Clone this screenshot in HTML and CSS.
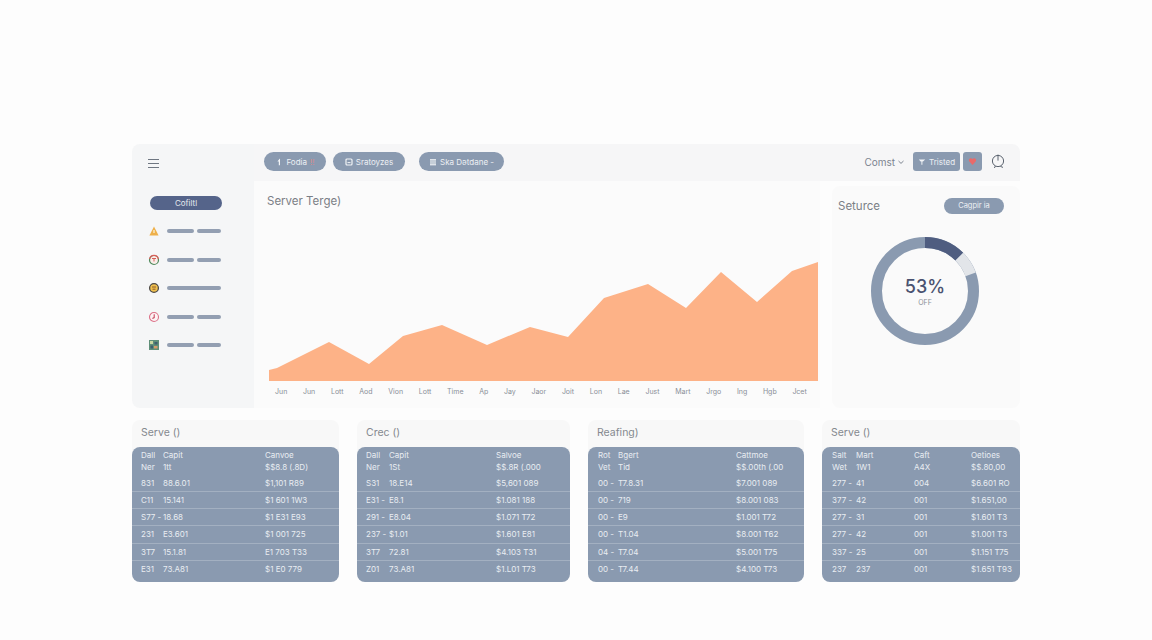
FILE: index.html
```html
<!DOCTYPE HTML>
<html>
<head>
    <meta charset="utf-8">
    <title>Server dashboard</title>
    <link rel="stylesheet" href="styles.css">
</head>
<body>
<div class="dash">
    <div class="top">
        <div class="side">
            <div class="burger"><i></i><i></i><i></i></div>
            <div class="side-pill">Cofiltl</div>
            <div class="side-item">
                <svg class="side-icon" viewBox="0 0 12 12"><path d="M6 1.5 L10.6 10.4 H1.4 Z" fill="#eeb04a"/><rect x="5.4" y="5" width="1.2" height="3" fill="#fff3d8"/></svg>
                <span class="bar"></span><span class="bar"></span>
            </div>
            <div class="side-item">
                <svg class="side-icon" viewBox="0 0 12 12"><circle cx="6" cy="6" r="4.5" fill="#fbeeea" stroke="#4f8a5c" stroke-width="1.2"/><path d="M1.6 5 A4.5 4.5 0 0 1 10.4 5" fill="none" stroke="#d9605a" stroke-width="1.2"/><path d="M4 4.5 H8 M6 4.5 V7.5" stroke="#d9605a" stroke-width="1"/></svg>
                <span class="bar"></span><span class="bar"></span>
            </div>
            <div class="side-item">
                <svg class="side-icon" viewBox="0 0 12 12"><circle cx="6" cy="6" r="4.4" fill="#f1c14e" stroke="#4d4a48" stroke-width="1.3"/><path d="M4 5 H8 M4.5 7.2 H7.5" stroke="#8a5a2c" stroke-width="1"/></svg>
                <span class="bar wide"></span>
            </div>
            <div class="side-item">
                <svg class="side-icon" viewBox="0 0 12 12"><circle cx="6" cy="6" r="4.5" fill="#fdf3f5" stroke="#dc7188" stroke-width="1.1"/><path d="M6.2 3.2 V6.6 L4.4 7.6" fill="none" stroke="#c9485f" stroke-width="1.1"/></svg>
                <span class="bar"></span><span class="bar"></span>
            </div>
            <div class="side-item">
                <svg class="side-icon" viewBox="0 0 12 12"><rect x="1" y="1" width="10" height="10" fill="#5f8f78"/><rect x="2" y="2" width="3" height="3" fill="#c9d6a2"/><rect x="6.5" y="3" width="3" height="2.5" fill="#3e5f6e"/><rect x="2.5" y="6.5" width="2.5" height="3" fill="#3e5f6e"/><rect x="6" y="7" width="3.5" height="2.5" fill="#d59a6a"/></svg>
                <span class="bar"></span><span class="bar"></span>
            </div>
        </div>
        <div class="main">
            <div class="topbar">
                <div class="tool tool-1">
                    <svg class="tool-icon" viewBox="0 0 8 8"><path d="M4.6 .8 L2.4 3.6 H3.8 V7.2 H5 V.8 Z" fill="#f1f3f6"/></svg>
                    <span>Fodia</span><span class="tool-red">!!</span>
                </div>
                <div class="tool tool-2">
                    <svg class="tool-icon" viewBox="0 0 8 8"><rect x="1" y="1" width="6" height="6" rx="1" fill="none" stroke="#f1f3f6" stroke-width="1.2"/><path d="M2.5 4.6 H5.5" stroke="#f1f3f6"/></svg>
                    <span>Sratoyzes</span>
                </div>
                <div class="tool tool-3">
                    <svg class="tool-icon" viewBox="0 0 8 8"><rect x="1" y="1" width="6" height="6.4" fill="#dfe4ea"/><path d="M1 3 H7 M1 5 H7" stroke="#8a9ab0" stroke-width=".6"/></svg>
                    <span>Ska Dətdane -</span>
                </div>
                <div class="top-right">
                    <span class="count">Comst</span>
                    <svg class="chev" viewBox="0 0 8 8"><path d="M1.5 3 L4 5.4 L6.5 3" fill="none" stroke="#7c8490" stroke-width="1"/></svg>
                    <div class="square">
                        <svg class="tool-icon" viewBox="0 0 8 8"><path d="M.8 1.4 H7.2 L5 3.6 H4.4 V6.8 H3.4 V3.6 H2.6 Z" fill="#f1f3f6"/></svg>
                        <span>Tristed</span>
                    </div>
                    <div class="alert"><svg viewBox="0 0 8 8"><path d="M4 7 L1 3.8 A1.7 1.7 0 0 1 4 2 A1.7 1.7 0 0 1 7 3.8 Z" fill="#e86a6a"/></svg></div>
                    <svg class="bell" viewBox="0 0 14 15"><circle cx="7" cy="7" r="5.6" fill="none" stroke="#5c6470" stroke-width="1"/><path d="M7 .6 V6.6 M4.4 12 L3.4 14 M9.4 12.4 L12 13.4" fill="none" stroke="#5c6470" stroke-width="1"/></svg>
                </div>
            </div>
            <div class="panels">
                <div class="chart-panel">
                    <div class="panel-title">Server Terge)</div>
                    <svg class="area" viewBox="0 0 549 126">
                        <polygon fill="#fdb287" points="0,115 8,113 60,87 100,109 134,81 173,70 218,90 261,72 299,82 335,43 379,29 417,53 452,17 488,47 523,16 549,7 549,126 0,126"/>
                    </svg>
                    <div class="months">
                        <span>Jun</span><span>Jun</span><span>Lott</span><span>Aod</span><span>Vion</span><span>Lott</span><span>Time</span><span>Ap</span><span>Jay</span><span>Jaor</span><span>Joit</span><span>Lon</span><span>Lae</span><span>Just</span><span>Mart</span><span>Jrgo</span><span>Ing</span><span>Hgb</span><span>Jcet</span>
                    </div>
                </div>
                <div class="donut-panel">
                    <div class="donut-head">
                        <span class="panel-title">Seturce</span>
                        <span class="donut-pill">Cagpir ia</span>
                    </div>
                    <div class="donut">
                        <svg class="donut-ring" viewBox="0 0 108 108">
                            <circle cx="54" cy="54" r="48.5" fill="none" stroke="#8a9ab0" stroke-width="11"/>
                            <path d="M54 5.5 A48.5 48.5 0 0 1 88.3 19.7" fill="none" stroke="#4f5d80" stroke-width="11"/>
                            <path d="M88.3 19.7 A48.5 48.5 0 0 1 99.6 37.4" fill="none" stroke="#e2e5e9" stroke-width="11"/>
                        </svg>
                        <div class="donut-num">53%</div>
                        <div class="donut-sub">OFF</div>
                    </div>
                </div>
            </div>
        </div>
    </div>

    <div class="cards">
        <div class="card card-1">
            <div class="card-title">Serve ()</div>
            <div class="sheet">
                <div class="head"><div class="row"><span>Dall</span><span>Capit</span><span>Canvoe</span></div><div class="row"><span>Ner</span><span>1tt</span><span>$$8.8 (.8D)</span></div></div>
                <div class="row"><span>831</span><span>88.6.01</span><span>$1,101 R89</span></div>
                <div class="row"><span>C11</span><span>15.141</span><span>$1 601 1W3</span></div>
                <div class="row"><span>S77 -</span><span>18.68</span><span>$1 E31 E93</span></div>
                <div class="row"><span>231</span><span>E3.601</span><span>$1 001 725</span></div>
                <div class="row"><span>3T7</span><span>15.1.81</span><span>E1 703 T33</span></div>
                <div class="row"><span>E31</span><span>73.A81</span><span>$1 E0 779</span></div>
            </div>
        </div>
        <div class="card card-2">
            <div class="card-title">Crec ()</div>
            <div class="sheet">
                <div class="head"><div class="row"><span>Dall</span><span>Capit</span><span>Salvoe</span></div><div class="row"><span>Ner</span><span>1St</span><span>$$.8R (.000</span></div></div>
                <div class="row"><span>S31</span><span>18.E14</span><span>$5,601 089</span></div>
                <div class="row"><span>E31 -</span><span>E8.1</span><span>$1.081 188</span></div>
                <div class="row"><span>291 -</span><span>E8.04</span><span>$1.071 T72</span></div>
                <div class="row"><span>237 -</span><span>$1.01</span><span>$1.601 E81</span></div>
                <div class="row"><span>3T7</span><span>72.81</span><span>$4.103 T31</span></div>
                <div class="row"><span>Z01</span><span>73.A81</span><span>$1.L01 T73</span></div>
            </div>
        </div>
        <div class="card card-3">
            <div class="card-title">Reafing)</div>
            <div class="sheet">
                <div class="head"><div class="row"><span>Rot</span><span>Bgert</span><span>Cattmoe</span></div><div class="row"><span>Vet</span><span>Tid</span><span>$$.00th (.00</span></div></div>
                <div class="row"><span>00 -</span><span>T7.8.31</span><span>$7.001 089</span></div>
                <div class="row"><span>00 -</span><span>719</span><span>$8.001 083</span></div>
                <div class="row"><span>00 -</span><span>E9</span><span>$1.001 T72</span></div>
                <div class="row"><span>00 -</span><span>T1.04</span><span>$8.001 T62</span></div>
                <div class="row"><span>04 -</span><span>T7.04</span><span>$5.001 T75</span></div>
                <div class="row"><span>00 -</span><span>T7.44</span><span>$4.100 T73</span></div>
            </div>
        </div>
        <div class="card card-4">
            <div class="card-title">Serve ()</div>
            <div class="sheet">
                <div class="head"><div class="row"><span>Salt</span><span>Mart</span><span>Caft</span><span>Oetioes</span></div><div class="row"><span>Wet</span><span>1W1</span><span>A4X</span><span>$$.80,00</span></div></div>
                <div class="row"><span>277 -</span><span>41</span><span>004</span><span>$6.601 RO</span></div>
                <div class="row"><span>377 -</span><span>42</span><span>001</span><span>$1.651,00</span></div>
                <div class="row"><span>277 -</span><span>31</span><span>001</span><span>$1.601 T3</span></div>
                <div class="row"><span>277 -</span><span>42</span><span>001</span><span>$1.001 T3</span></div>
                <div class="row"><span>337 -</span><span>25</span><span>001</span><span>$1.151 T75</span></div>
                <div class="row"><span>237</span><span>237</span><span>001</span><span>$1.651 T93</span></div>
            </div>
        </div>
    </div>
</div>
</body>
</html>
```

FILE: styles.css
```css
html, body {
    margin: 0;
    padding: 0;
    height: 100%;
    overflow: hidden;
    background: #fdfdfd;
    font-family: Inter, "Liberation Sans", sans-serif;
}

.dash {
    width: 888px;
    margin: 144px 0 0 132px;
}

.top {
    display: flex;
    height: 264px;
}

/*sidebar*/
.side {
    width: 122px;
    background: #f5f6f7;
    border-radius: 8px 0 0 8px;
    box-sizing: border-box;
    padding: 15px 0 0 16px;
}
.burger {
    width: 11px;
    display: flex;
    flex-direction: column;
    gap: 3px;
}
.burger i {
    display: block;
    height: 1px;
    background: #6f7782;
}
.side-pill {
    width: 72px;
    height: 14px;
    margin: 28px 0 14px 2px;
    border-radius: 7px;
    background: #55648a;
    color: #e6e9ef;
    font-size: 8px;
    line-height: 14px;
    text-align: center;
}
.side-item {
    display: flex;
    align-items: center;
    height: 14px;
    margin-bottom: 14.5px;
    gap: 3px;
}
.side-icon {
    width: 12px;
    height: 12px;
    margin-right: 4px;
    flex: none;
}
.bar {
    width: 27px;
    height: 4px;
    border-radius: 2px;
    background: #939fb2;
}
.bar:last-child {
    width: 24px;
}
.bar.wide {
    width: 54px;
}

/*top bar*/
.main {
    flex: 1;
    display: flex;
    flex-direction: column;
}
.topbar {
    height: 37px;
    flex: none;
    display: flex;
    align-items: center;
    padding: 0 15px 2px 10px;
    box-sizing: border-box;
    background: #f6f6f7;
    border-radius: 0 8px 0 0;
    font-size: 8px;
    color: #edf0f4;
}
.tool {
    display: flex;
    align-items: center;
    justify-content: center;
    gap: 3px;
    height: 19px;
    border-radius: 10px;
    background: #8a9ab0;
}
.tool-1 { width: 62px; }
.tool-2 { width: 72px; margin-left: 7px; }
.tool-3 { width: 85px; margin-left: 14px; }
.tool-red { color: #d98a8a; }
.tool-icon {
    width: 8px;
    height: 8px;
}
.top-right {
    margin-left: auto;
    display: flex;
    align-items: center;
}
.count {
    font-size: 10px;
    color: #7c8490;
}
.chev {
    width: 8px;
    height: 8px;
    margin: 0 8px 0 2px;
}
.square, .alert {
    height: 19px;
    border-radius: 3px;
    background: #8a9ab0;
    display: flex;
    align-items: center;
    justify-content: center;
}
.square {
    width: 47px;
    gap: 3px;
}
.alert {
    width: 19px;
    margin-left: 3px;
}
.alert svg {
    width: 9px;
    height: 9px;
}
.bell {
    width: 14px;
    height: 15px;
    margin-left: 9px;
}

/*chart*/
.panels {
    flex: 1;
    display: flex;
}
.chart-panel {
    width: 566px;
    background: #fbfbfb;
    padding: 13px 0 0 13px;
    box-sizing: border-box;
}
.panel-title {
    font-size: 11.5px;
    line-height: 14px;
    color: #7b7f86;
}
.area {
    display: block;
    width: 549px;
    height: 126px;
    margin: 47px 0 0 2px;
}
.months {
    display: flex;
    justify-content: space-between;
    width: 532px;
    margin: 6px 0 0 8px;
    font-size: 7px;
    line-height: 10px;
    color: #8a8f98;
}

/*donut*/
.donut-panel {
    width: 188px;
    margin: 5px 0 0 12px;
    background: #fafafa;
    border-radius: 8px;
    padding: 12px 16px 0 6px;
    box-sizing: border-box;
}
.donut-head {
    display: flex;
    justify-content: space-between;
    align-items: center;
}
.donut-pill {
    width: 60px;
    height: 16px;
    border-radius: 8px;
    background: #8a9ab0;
    color: #edf0f4;
    font-size: 7.5px;
    line-height: 16px;
    text-align: center;
}
.donut {
    position: relative;
    width: 108px;
    height: 108px;
    margin: 23px 0 0 33px;
}
.donut-ring {
    display: block;
    width: 108px;
    height: 108px;
}
.donut-num {
    position: absolute;
    top: 39px;
    left: 0;
    right: 0;
    text-align: center;
    font-size: 18px;
    line-height: 22px;
    font-weight: 500;
    color: #4a5270;
}
.donut-sub {
    position: absolute;
    top: 61px;
    left: 0;
    right: 0;
    text-align: center;
    font-size: 7px;
    line-height: 10px;
    color: #8a8f98;
}

/*tables*/
.cards {
    display: flex;
    gap: 18px;
    margin-top: 12px;
}
.card {
    flex: none;
    background: #f8f8f8;
    border-radius: 8px;
}
.card-1 { width: 207px; }
.card-2 { width: 213px; }
.card-3 { width: 216px; }
.card-4 { width: 198px; margin-left: 0; }
.card-title {
    height: 27px;
    padding-left: 9px;
    font-size: 10.5px;
    line-height: 25px;
    color: #85898f;
}
.sheet {
    height: 135px;
    box-sizing: border-box;
    background: #8a9ab0;
    border-radius: 8px;
    color: #e9edf2;
    font-size: 8px;
}
.row {
    display: grid;
    height: 17.3px;
    line-height: 17px;
    padding-left: 9px;
    box-sizing: border-box;
    border-bottom: 1px solid #a3b0c1;
    white-space: nowrap;
}
.sheet > .row:last-child {
    border-bottom: 0;
}
.head {
    height: 27.5px;
    padding-top: 3px;
    box-sizing: border-box;
}
.head .row {
    height: 11.5px;
    line-height: 11px;
    border-bottom: 0;
}
.card-1 .row { grid-template-columns: 22px 102px 1fr; }
.card-2 .row { grid-template-columns: 23px 107px 1fr; }
.card-3 .row { padding-left: 10px; grid-template-columns: 20px 118px 1fr; }
.card-4 .row { padding-left: 10px; grid-template-columns: 24px 58px 57px 1fr; }
```
